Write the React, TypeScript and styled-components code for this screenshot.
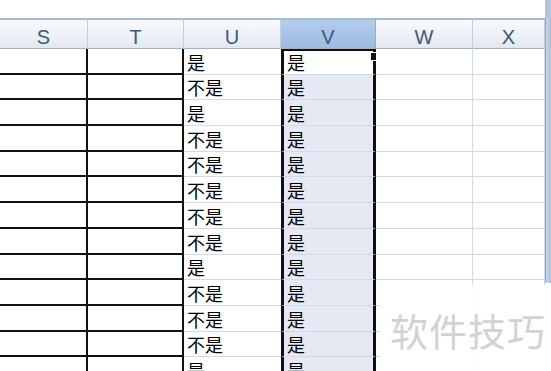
import styled, { createGlobalStyle } from "styled-components";

const GlobalStyle = createGlobalStyle`
  html, body { margin: 0; padding: 0; background: #fff; overflow: hidden; }
  body { font-family: "Noto Sans CJK SC", "Liberation Sans", sans-serif; }
`;

const Page = styled.div`
  position: relative;
  width: 551px;
  height: 371px;
  overflow: hidden;
  background: #fff;
  display: flex;
  flex-direction: column;
`;

const TopStrip = styled.div`
  height: 18px;
  flex: none;
  border-right: 6px solid #b3c6dd;
`;

const Body = styled.div`
  display: flex;
  flex: 1;
  min-height: 0;
`;

const Sheet = styled.div`
  display: grid;
  grid-template-columns: 88px 96px 97px 95px 97px 72px;
  grid-template-rows: 31px;
  grid-auto-rows: 25.7px;
  align-content: start;
  flex: none;
`;

const Scrollbar = styled.div`
  width: 6px;
  height: 265px;
  background: linear-gradient(90deg, #c9d7e8, #a9bfd9);
  border-left: 1px solid #8ba5c5;
  box-sizing: border-box;
`;

const Head = styled.div<{ $active?: boolean }>`
  box-sizing: border-box;
  border-top: 2px solid #a9bbd1;
  border-bottom: 1px solid #9fb5cd;
  border-right: 1px solid ${(p) => (p.$active ? "#8eaed6" : "#c3cfde")};
  background: ${(p) =>
    p.$active
      ? "linear-gradient(#b4cdec, #9cbbe2)"
      : "linear-gradient(#f7f9fc 0%, #eef2f7 50%, #e2e8f0 100%)"};
  color: #3d5a7a;
  font-family: "Liberation Sans", Arial, sans-serif;
  font-size: 20px;
  display: flex;
  align-items: center;
  justify-content: center;
  padding-top: 6px;
`;

type Kind = "dark" | "plain" | "sel" | "selTop" | "grid";

const Cell = styled.div<{ $kind: Kind }>`
  position: relative;
  box-sizing: border-box;
  font-size: 18px;
  line-height: 1;
  color: #000;
  display: flex;
  align-items: flex-end;
  padding: 0 0 3px 3px;
  white-space: nowrap;
  border-bottom: ${(p) =>
    p.$kind === "dark" ? "2px solid #111" : "1px solid #d3dae6"};
  border-right: ${(p) =>
    p.$kind === "dark"
      ? "2px solid #111"
      : p.$kind === "plain"
      ? "none"
      : p.$kind === "grid"
      ? "1px solid #d3dae6"
      : "3px solid #111"};
  border-left: ${(p) =>
    p.$kind === "sel" || p.$kind === "selTop" ? "3px solid #111" : "none"};
  border-top: ${(p) => (p.$kind === "selTop" ? "2px solid #111" : "none")};
  background: ${(p) => (p.$kind === "sel" ? "#e5e9f3" : "#fff")};
`;

const Handle = styled.span`
  position: absolute;
  right: -6px;
  top: 1px;
  width: 7px;
  height: 7px;
  background: #111;
  border: 1px solid #fff;
`;

const Watermark = styled.div`
  position: absolute;
  left: 380px;
  top: 285px;
  right: 0;
  bottom: 0;
  background: rgba(255, 255, 255, 0.93);
  color: #d2d2d2;
  font-family: "Noto Sans CJK SC", sans-serif;
  font-size: 38px;
  display: flex;
  align-items: flex-start;
  padding: 17px 0 0 10px;
  letter-spacing: 1px;
`;

const heads = ["S", "T", "U", "V", "W", "X"];
const uValues = ["是", "不是", "是", "不是", "不是", "不是", "不是", "不是", "是", "不是", "不是", "不是", "是"];

export default function App() {
  return (
    <Page>
      <GlobalStyle />
      <TopStrip />
      <Body>
        <Sheet>
          {heads.map((h) => (
            <Head key={h} $active={h === "V"}>
              {h}
            </Head>
          ))}
          {uValues.map((u, i) => [
            <Cell key={`s${i}`} $kind="dark" />,
            <Cell key={`t${i}`} $kind="dark" />,
            <Cell key={`u${i}`} $kind="plain">{u}</Cell>,
            <Cell key={`v${i}`} $kind={i === 0 ? "selTop" : "sel"}>
              是{i === 0 && <Handle />}
            </Cell>,
            <Cell key={`w${i}`} $kind="grid" />,
            <Cell key={`x${i}`} $kind="grid" />,
          ])}
        </Sheet>
        <Scrollbar />
      </Body>
      <Watermark>软件技巧</Watermark>
    </Page>
  );
}
